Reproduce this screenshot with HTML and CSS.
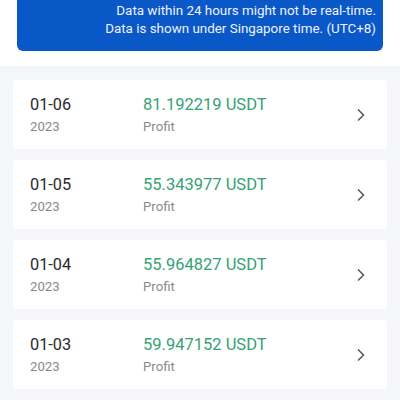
FILE: index.html
```html
<!DOCTYPE html>
<html lang="en">
<head>
    <meta charset="UTF-8">
    <title>Profit History</title>
    <link rel="stylesheet" href="styles.css">
</head>
<body>
    <div class="top">
        <div class="notice">
            <div>Data within 24 hours might not be real-time.</div>
            <div>Data is shown under Singapore time. (UTC+8)</div>
        </div>
    </div>
    <div class="list">
        <div class="card">
            <div class="date">
                <div class="day">01-06</div>
                <div class="year">2023</div>
            </div>
            <div class="amount">
                <div class="value">81.192219 USDT</div>
                <div class="label">Profit</div>
            </div>
            <svg class="arrow" width="12" height="14" viewBox="0 0 12 14"><path d="M3 1.5 L8.5 7 L3 12.5" fill="none" stroke="#555" stroke-width="1.5"/></svg>
        </div>
        <div class="card">
            <div class="date">
                <div class="day">01-05</div>
                <div class="year">2023</div>
            </div>
            <div class="amount">
                <div class="value">55.343977 USDT</div>
                <div class="label">Profit</div>
            </div>
            <svg class="arrow" width="12" height="14" viewBox="0 0 12 14"><path d="M3 1.5 L8.5 7 L3 12.5" fill="none" stroke="#555" stroke-width="1.5"/></svg>
        </div>
        <div class="card">
            <div class="date">
                <div class="day">01-04</div>
                <div class="year">2023</div>
            </div>
            <div class="amount">
                <div class="value">55.964827 USDT</div>
                <div class="label">Profit</div>
            </div>
            <svg class="arrow" width="12" height="14" viewBox="0 0 12 14"><path d="M3 1.5 L8.5 7 L3 12.5" fill="none" stroke="#555" stroke-width="1.5"/></svg>
        </div>
        <div class="card">
            <div class="date">
                <div class="day">01-03</div>
                <div class="year">2023</div>
            </div>
            <div class="amount">
                <div class="value">59.947152 USDT</div>
                <div class="label">Profit</div>
            </div>
            <svg class="arrow" width="12" height="14" viewBox="0 0 12 14"><path d="M3 1.5 L8.5 7 L3 12.5" fill="none" stroke="#555" stroke-width="1.5"/></svg>
        </div>
    </div>
</body>
</html>
```

FILE: styles.css
```css
body {
    margin: 0;
    font-family: Roboto, "Noto Sans", sans-serif;
    background-color: #f4f6f9;
    height: 400px;
    overflow: hidden;
}
.top {
    background-color: #fff;
    padding: 0 17px 15px;
}
.notice {
    background-color: #0a57c8;
    color: #eef3ff;
    font-size: 13.4px;
    line-height: 18px;
    text-align: right;
    padding: 2px 7px 13px;
    border-radius: 0 0 6px 6px;
}
.list {
    padding: 14px 13px;
    display: flex;
    flex-direction: column;
    gap: 11px;
}
.card {
    background-color: #fff;
    height: 69px;
    border-radius: 4px;
    display: flex;
    align-items: center;
    padding: 0 20px 0 17px;
}
.date {
    width: 113px;
}
.day, .value {
    font-size: 16.3px;
    line-height: 22px;
    padding-top: 2px;
}
.day {
    color: #2a2a2a;
}
.year, .label {
    font-size: 13.2px;
    line-height: 22px;
    color: #8a8a8a;
}
.amount {
    flex: 1;
}
.value {
    color: #35a273;
    font-size: 16.5px;
}
.arrow {
    display: block;
}
```
